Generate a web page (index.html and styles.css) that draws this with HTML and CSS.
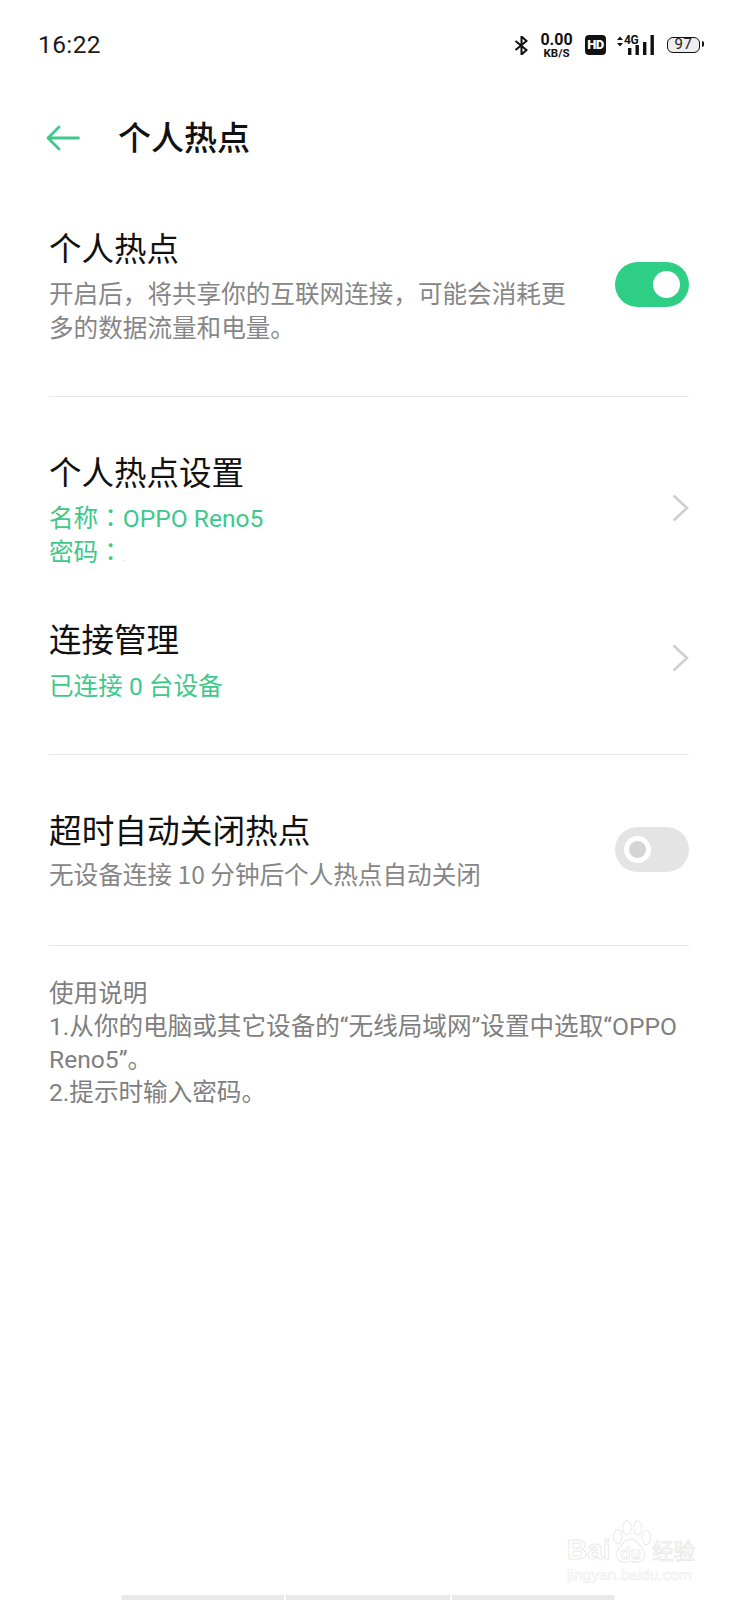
FILE: index.html
```html
<!DOCTYPE html>
<html lang="zh">
<head>
<meta charset="utf-8">
<title>个人热点</title>
<link rel="stylesheet" href="styles.css">
</head>
<body>
<div class="page">
  <header class="status">
    <span class="time">16:22</span>
    <div class="status-icons">
      <svg class="bt" width="15" height="19" viewBox="0 0 15 19"><path d="M1.500 5l11 9-5 4.500V.5l5 4.500-11 9" fill="none" stroke="#111" stroke-width="2"/></svg>
      <div class="speed"><span class="speed-num">0.00</span><span class="speed-unit">KB/S</span></div>
      <span class="hd">HD</span>
      <div class="net">
        <svg class="arrows" width="6" height="11" viewBox="0 0 6 11"><path d="M0 4L3 .5 6 4zM0 7l3 3.500L6 7z" fill="#111"/></svg>
        <span class="net-label">4G</span>
        <svg class="bars" width="26" height="20" viewBox="0 0 26 20"><rect x="0" y="13" width="3.400" height="7" fill="#111"/><rect x="7.500" y="10" width="3.400" height="10" fill="#111"/><rect x="15" y="7" width="3.400" height="13" fill="#111"/><rect x="22.500" y="0" width="3.400" height="20" fill="#111"/></svg>
      </div>
      <div class="battery"><span class="battery-num">97</span></div>
    </div>
  </header>

  <div class="appbar">
    <svg class="back" width="36" height="26" viewBox="0 0 36 26"><path d="M33.500 13H3.500M14 2L3 13l11 11" fill="none" stroke="#3ec98a" stroke-width="2.800" stroke-linecap="round" stroke-linejoin="round"/></svg>
    <h1 class="title">个人热点</h1>
  </div>

  <section class="group group-first">
    <div class="row">
      <div class="row-text">
        <div class="row-title">个人热点</div>
        <div class="row-desc desc-narrow">开启后，将共享你的互联网连接，可能会消耗更多的数据流量和电量。</div>
      </div>
      <div class="switch switch-on"><span class="knob"></span></div>
    </div>
  </section>

  <section class="group group-second">
    <div class="row row-link">
      <div class="row-text">
        <div class="row-title">个人热点设置</div>
        <div class="row-sub row-sub-gap">名称<span class="colon" lang="zh-Hant">：</span>OPPO Reno5</div>
        <div class="row-sub">密码<span class="colon" lang="zh-Hant">：</span><span class="speck">.</span></div>
      </div>
      <svg class="chev chev-one" width="17" height="28" viewBox="0 0 17 28"><path d="M1.500 1.500L15 14 1.500 26.500" fill="none" stroke="#cfcfcf" stroke-width="2.600"/></svg>
    </div>
    <div class="row row-link row-manage">
      <div class="row-text">
        <div class="row-title">连接管理</div>
        <div class="row-sub row-sub-wide">已连接 0 台设备</div>
      </div>
      <svg class="chev chev-two" width="17" height="28" viewBox="0 0 17 28"><path d="M1.500 1.500L15 14 1.500 26.500" fill="none" stroke="#cfcfcf" stroke-width="2.600"/></svg>
    </div>
  </section>

  <section class="group group-third">
    <div class="row">
      <div class="row-text">
        <div class="row-title row-title-long">超时自动关闭热点</div>
        <div class="row-desc">无设备连接 10 分钟后个人热点自动关闭</div>
      </div>
      <div class="switch switch-off"><span class="knob"></span></div>
    </div>
  </section>

  <section class="notes">
    <p>使用说明</p>
    <p>1.从你的电脑或其它设备的“无线局域网”设置中选取“OPPO Reno5”。</p>
    <p>2.提示时输入密码。</p>
  </section>

  <div class="watermark">
    <svg class="paw" width="40" height="44" viewBox="4 0 56 50" preserveAspectRatio="none"><g fill="#fff" stroke="#ececec" stroke-width="1.500"><ellipse cx="12" cy="19" rx="6" ry="8"/><ellipse cx="25" cy="9" rx="6" ry="8"/><ellipse cx="40" cy="9" rx="5.500" ry="8"/><ellipse cx="52" cy="20" rx="6" ry="8"/><path d="M30 22c8 0 12 6 17 11 6 7 1 16-8 15-4 0-6-1-9-1s-6 2-11 1c-8-1-11-9-6-15 6-5 8-11 17-11z"/></g></svg>
    <span class="wm-bai">Bai</span>
    <span class="wm-du">du</span>
    <span class="wm-cn">经验</span>
    <span class="wm-url">jingyan.baidu.com</span>
  </div>

  <div class="home-bar"><span class="seg"></span><span class="seg"></span><span class="seg"></span></div>
</div>
</body>
</html>
```

FILE: styles.css
```css
* { box-sizing: border-box; margin: 0; padding: 0; }
html, body { background: #fff; }
body { font-family: "Noto Sans CJK SC", "Noto Sans", sans-serif; color: #111; }
.page { position: relative; width: 738px; height: 1600px; overflow: hidden; padding: 0 49px; }

.status { height: 90px; margin: 0 -11px; padding: 30px 0 0; display: flex; justify-content: space-between; align-items: flex-start; }
.time { font: 24.500px/30px Roboto, sans-serif; letter-spacing: 0.400px; color: #1a1a1a; }
.status-icons { display: flex; align-items: center; height: 30px; font-family: Roboto, sans-serif; }
.bt { margin-right: 11px; }
.speed { display: flex; flex-direction: column; align-items: center; width: 33px; margin-right: 12px; color: #111; font-weight: 700; }
.speed-num { font-size: 16px; line-height: 14px; }
.speed-unit { font-size: 11.500px; line-height: 10px; margin-top: 1px; }
.hd { width: 21px; height: 20px; border-radius: 4px; background: #111; color: #fff; font-size: 13px; font-weight: 900; line-height: 20px; text-align: center; letter-spacing: -0.500px; margin-right: 11px; }
.net { position: relative; width: 37px; height: 22px; margin-right: 13px; }
.arrows { position: absolute; left: 0; top: 2px; }
.net-label { position: absolute; left: 7px; top: 1px; font-size: 12px; line-height: 10px; font-weight: 700; letter-spacing: -0.300px; }
.bars { position: absolute; left: 11px; top: 1px; }
.battery { position: relative; width: 33px; height: 16px; border: 1.700px solid #111; border-radius: 6px; background: #eee; text-align: center; margin-top: -1px; }
.battery::after { content: ""; position: absolute; right: -5px; top: 3px; width: 2px; height: 6px; background: #111; border-radius: 0 2px 2px 0; }
.battery-num { display: block; font-size: 15px; line-height: 13px; letter-spacing: 0.500px; color: #222; }

.appbar { height: 50px; margin-top: 21px; display: flex; align-items: center; }
.back { margin-left: -4px; margin-right: 37px; margin-top: 3px; flex: none; }
.title { font-size: 33px; font-weight: 500; line-height: 50px; color: #111; }

.group { border-bottom: 1px solid #e6e6e6; }
.group-first { margin-top: 48px; height: 188px; padding-top: 16px; }
.group-second { height: 358px; padding-top: 52px; }
.group-third { height: 191px; padding-top: 52px; }
.row { display: flex; justify-content: space-between; align-items: center; }
.row-text { flex: 1; min-width: 0; }
.row-title { font-size: 32.500px; line-height: 44px; color: #111; }
.row-title-long { font-size: 32.700px; }
.row-desc { font-size: 24.600px; line-height: 34px; color: #868686; margin-top: 5px; }
.desc-narrow { width: 520px; margin-top: 6px; }
.row-sub { font-family: Roboto, "Noto Sans CJK SC", sans-serif; font-size: 24.600px; line-height: 33.500px; color: #3ec98a; }
.row-sub-gap { margin-top: 9px; }
.row-sub-wide { margin-top: 10px; }
.colon { font-family: "Noto Sans CJK TC", sans-serif; line-height: 1; }
.speck { color: #dfe8e4; font-size: 14px; line-height: 1; }
.row-manage { margin-top: 47px; }
.chev { flex: none; }
.chev-one { margin-top: -3px; }
.chev-two { margin-top: -4px; }

.switch { position: relative; width: 74px; height: 45px; border-radius: 23px; flex: none; }
.switch-on { background: #2ecf84; }
.switch-off { background: #e4e4e4; margin-top: 1px; }
.knob { position: absolute; top: 9px; width: 27px; height: 27px; border-radius: 50%; background: #fff; }
.switch-on .knob { right: 9px; }
.switch-off .knob { left: 9px; background: #d4d4d4; border: 5px solid #fff; }

.notes { margin-top: 31px; font-family: Roboto, "Noto Sans CJK SC", sans-serif; font-size: 24.600px; line-height: 33px; color: #7f7f7f; }

.watermark { position: absolute; left: 567px; top: 1520px; width: 140px; height: 70px; color: #fff; white-space: nowrap; }
.paw { position: absolute; left: 45px; top: 0; }
.wm-bai { position: absolute; left: 0; top: 16px; font: 700 28px/28px "Liberation Sans", sans-serif; -webkit-text-stroke: 1px #ebebeb; }
.wm-du { position: absolute; left: 53px; top: 26px; font: 700 17px/16px "Liberation Sans", sans-serif; -webkit-text-stroke: 0.800px #ebebeb; }
.wm-cn { position: absolute; left: 85px; top: 18px; font-family: "Noto Sans CJK SC", sans-serif; font-size: 21.500px; line-height: 24px; -webkit-text-stroke: 1px #ebebeb; }
.wm-url { position: absolute; left: 0; top: 46px; font: 15.500px/18px "Liberation Sans", sans-serif; -webkit-text-stroke: 0.700px #efefef; }

.home-bar { position: absolute; left: 121px; bottom: 0; width: 494px; height: 5px; display: flex; gap: 2px; }
.seg { flex: 1; background: #e9e9e9; }
.seg:first-child { border-radius: 3px 0 0 3px; }
.seg:last-child { border-radius: 0 3px 3px 0; }
```
